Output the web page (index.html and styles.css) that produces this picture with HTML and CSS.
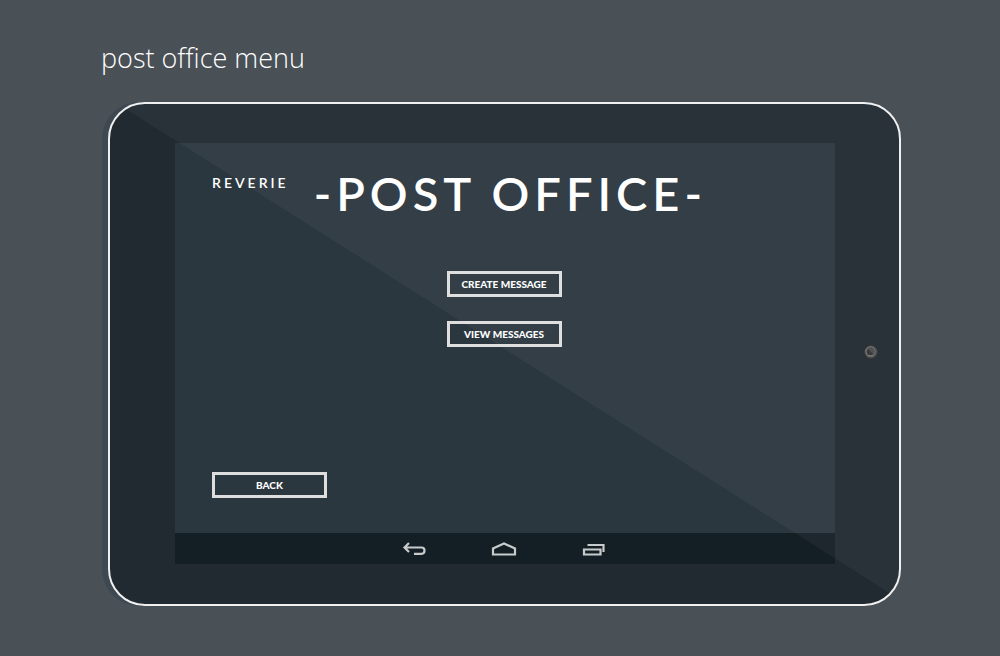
FILE: index.html
```
<!DOCTYPE html>
<html lang="en">
<head>
<meta charset="utf-8">
<meta name="viewport" content="width=device-width, initial-scale=1">
<title>Post office menu</title>
<link rel="stylesheet" href="styles.css">
</head>
<body>
<main class="page">
  <h1 class="caption">post office menu</h1>
  <section class="tablet">
    <div class="screen">
      <div class="content">
        <header class="header">
          <span class="brand">REVERIE</span>
          <h2 class="title">-POST OFFICE-</h2>
        </header>
        <div class="actions">
          <button class="button" type="button">CREATE MESSAGE</button>
          <button class="button" type="button">VIEW MESSAGES</button>
        </div>
        <button class="button button-back" type="button">BACK</button>
      </div>
      <nav class="navbar">
        <button class="nav-button" type="button" aria-label="Back">
          <svg width="26" height="16" viewBox="0 0 26 16"><path d="M8 2 3.500 6.500 8 11M4 6.500H20.500Q23.500 6.500 23.500 9.500Q23.500 12.800 20.500 12.800H13"/></svg>
        </button>
        <button class="nav-button" type="button" aria-label="Home">
          <svg width="26" height="16" viewBox="0 0 26 16"><path d="M2 13.500V7.500L13 2.500L24 7.500V13.500Z"/></svg>
        </button>
        <button class="nav-button" type="button" aria-label="Recent apps">
          <svg width="26" height="16" viewBox="0 0 26 16"><path d="M3 8.500H19.500V13.500H3ZM6.500 4H22.500V11"/></svg>
        </button>
      </nav>
    </div>
    <svg class="camera" width="16" height="16" viewBox="0 0 16 16">
      <circle cx="8" cy="8" r="6.500" fill="#454544"/>
      <circle cx="7.500" cy="7.500" r="4.500" fill="#303234" stroke="#777674" stroke-width="1.300"/>
      <path d="M4.500 4.500 10.500 10.500A4 4 0 0 0 4.500 4.500" fill="#4a4b4c"/>
    </svg>
    <div class="glare"></div>
  </section>
</main>
</body>
</html>
```
FILE: styles.css
```
* {
  box-sizing: border-box;
}

body {
  margin: 0;
  background: #495056;
  color: #fff;
  font-family: Lato, "Open Sans", sans-serif;
}

.page {
  padding: 38px 99px 50px 108px;
}

.caption {
  margin: 0 0 24px -7px;
  font: 300 27px/40px "Open Sans", sans-serif;
}

.tablet {
  position: relative;
  display: flex;
  align-items: center;
  padding: 39px 20px 40px 65px;
  border: 2px solid #f0f0f0;
  border-radius: 37px;
  background: #222a31;
  box-shadow: -6px 0 0 #3e4851;
}

.screen {
  flex: 1;
  background: #2b373f;
}

.content {
  padding: 25px 39px 35px 37px;
}

.header {
  display: flex;
  align-items: flex-start;
  gap: 25px;
}

.brand {
  padding-top: 5px;
  font-size: 14px;
  font-weight: 600;
  line-height: 20px;
  letter-spacing: 3px;
}

.title {
  margin: 0;
  font-size: 47px;
  font-weight: 600;
  line-height: 50px;
  letter-spacing: 5px;
  white-space: nowrap;
}

.actions {
  display: flex;
  flex-direction: column;
  align-items: center;
  gap: 24px;
  margin: 53px 0 125px;
}

.button {
  width: 115px;
  height: 26px;
  padding: 0;
  border: 3px solid #dedede;
  background: transparent;
  color: #fff;
  font: 900 10px/20px Lato, sans-serif;
}

.button-back {
  display: block;
}

.navbar {
  display: flex;
  justify-content: center;
  gap: 64px;
  padding: 8px 2px 7px 0;
  background: #141f25;
}

.nav-button {
  display: flex;
  padding: 0;
  border: 0;
  background: transparent;
}

.nav-button svg {
  fill: none;
  stroke: #c8cbcc;
  stroke-width: 2.2;
}

.camera {
  margin: 0 0 3px 28px;
}

.glare {
  position: absolute;
  inset: 0;
  border-radius: 35px;
  background: rgba(255, 255, 255, 0.04);
  clip-path: polygon(1% 0, 100% 0, 100% 99%);
  pointer-events: none;
}
```
